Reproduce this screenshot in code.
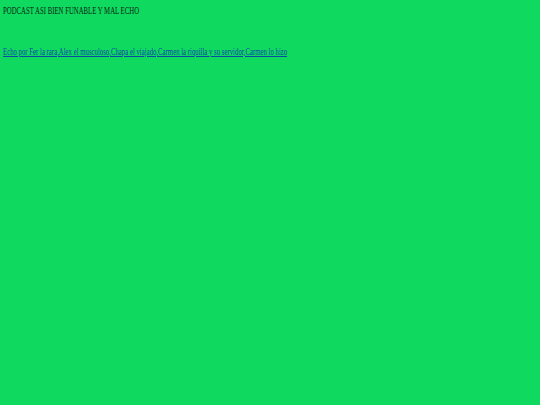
export default function App() {
  return (
    <div className="min-h-[405px] w-full bg-[#10d960] px-[3px] pt-[5px]" style={{ fontFamily: '"Liberation Serif", serif' }}>
      <p className="origin-left scale-x-[0.677] whitespace-nowrap text-[10px] leading-[12px] text-[#06240f]">PODCAST ASI BIEN FUNABLE Y MAL ECHO</p>
      <p className="mt-[29px] origin-left scale-x-[0.677] whitespace-nowrap text-[10px] leading-[12px]">
        <a href="#" className="text-[#0b4aa8] underline">Echo por Fer la rara,Alex el musculoso,Chapa el viajado,Carmen la riquilla y su servidor,Carmen lo hizo</a>
      </p>
    </div>
  );
}
